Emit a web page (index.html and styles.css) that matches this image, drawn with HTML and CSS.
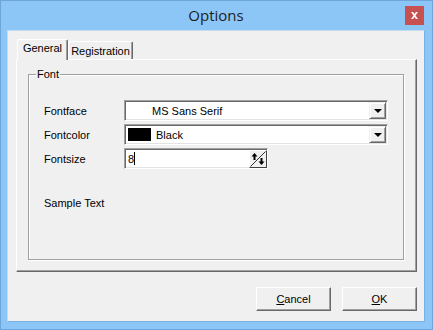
FILE: index.html
```html
<!DOCTYPE html>
<html>
<head>
<meta charset="utf-8">
<link rel="stylesheet" href="styles.css">
</head>
<body>
<div class="window">
  <div class="titlebar">
    <div class="title">Options</div>
    <div class="close">
      <svg width="7" height="7" viewBox="0 0 7 7"><path d="M0 0h2l1.5 2 1.5-2h2l-2.5 3.5 2.5 3.5h-2l-1.5-2-1.5 2h-2l2.5-3.5z" fill="#fff"/></svg>
    </div>
  </div>
  <div class="client">
    <div class="tabs">
      <div class="tab selected">General</div>
      <div class="tab">Registration</div>
    </div>
    <div class="panel">
      <div class="group">
        <span class="group-label">Font</span>
        <div class="form">
          <div class="label">Fontface</div>
          <div class="combo">
            <span class="combo-text indent">MS Sans Serif</span>
            <span class="drop"><span class="arrow"></span></span>
          </div>
          <div class="label">Fontcolor</div>
          <div class="combo">
            <span class="swatch"></span>
            <span class="combo-text">Black</span>
            <span class="drop"><span class="arrow"></span></span>
          </div>
          <div class="label">Fontsize</div>
          <div class="edit">
            <span class="edit-text">8</span><span class="caret"></span>
            <span class="spin">
              <svg width="16" height="16" viewBox="0 0 16 16">
                <path d="M0.5 15.5L15.5 0.5" stroke="#303030" stroke-width="1"/>
                <path d="M4.5 4v5" stroke="#000" stroke-width="2"/>
                <path d="M1.5 5.5L4.5 2 7.5 5.5z" fill="#000"/>
                <path d="M11.5 7v5" stroke="#000" stroke-width="2"/>
                <path d="M8.5 10.5L11.5 14 14.5 10.5z" fill="#000"/>
              </svg>
            </span>
          </div>
        </div>
        <div class="sample">Sample Text</div>
      </div>
    </div>
    <div class="buttons">
      <div class="btn"><u>C</u>ancel</div>
      <div class="btn"><u>O</u>K</div>
    </div>
  </div>
</div>
</body>
</html>
```

FILE: styles.css
```css
html, body {
  margin: 0;
  padding: 0;
}
body {
  width: 433px;
  height: 330px;
  overflow: hidden;
  font-family: "Liberation Sans", Arial, sans-serif;
  font-size: 11px;
  color: #000;
}
.window {
  box-sizing: border-box;
  width: 433px;
  height: 330px;
  border: 1px solid #6ea6da;
  background: #8bc6f7;
  padding: 0 7px 7px 6px;
  display: flex;
  flex-direction: column;
}
.titlebar {
  height: 29px;
  display: grid;
  grid-template-columns: 1fr auto 1fr;
}
.title {
  grid-column: 2;
  font-family: "Open Sans", "Noto Sans", sans-serif;
  font-size: 15px;
  color: #1e1e1e;
  line-height: 29px;
}
.close {
  grid-column: 3;
  justify-self: end;
  margin-top: 5px;
  margin-right: 1px;
  width: 19px;
  height: 19px;
  background: #c75050;
  display: flex;
  align-items: center;
  justify-content: center;
}
.client {
  flex: 1;
  background: #f0f0f0;
  border: 1px solid #c4dcf2;
  border-right-color: #79b1e4;
  border-bottom-color: #79b1e4;
  padding: 8px 7px 10px 8px;
  display: flex;
  flex-direction: column;
}
.tabs {
  height: 20px;
  display: flex;
  align-items: flex-end;
  padding-left: 1px;
}
.tab {
  box-sizing: border-box;
  height: 18px;
  width: 65px;
  border-top: 1px solid #fff;
  border-left: 1px solid #fff;
  border-right: 1px solid #696969;
  box-shadow: inset -1px 0 #a0a0a0;
  border-radius: 2px 2px 0 0;
  text-align: center;
  line-height: 16px;
  padding-top: 1px;
}
.tab.selected {
  width: 51px;
  height: 21px;
  margin-bottom: -1px;
  background: #f0f0f0;
  position: relative;
  z-index: 2;
  line-height: 17px;
  padding-top: 0;
}
.panel {
  box-sizing: border-box;
  height: 213px;
  border-top: 1px solid #fff;
  border-left: 1px solid #fff;
  border-right: 1px solid #696969;
  border-bottom: 1px solid #696969;
  box-shadow: inset -1px -1px #a0a0a0;
  padding: 14px 12px 11px 11px;
  display: flex;
  flex-direction: column;
}
.group {
  flex: 1;
  border: 1px solid #a0a0a0;
  box-shadow: inset 1px 1px #fff, 1px 1px #fff;
  position: relative;
  padding: 25px 0 0 15px;
}
.group-label {
  position: absolute;
  left: 7px;
  top: -7px;
  padding: 0 1px;
  background: #f0f0f0;
  line-height: 13px;
}
.form {
  display: grid;
  grid-template-columns: 80px 264px;
  grid-auto-rows: 21px;
  row-gap: 3px;
  align-items: center;
}
.form > .edit {
  width: 144px;
}
.combo, .edit {
  box-sizing: border-box;
  height: 21px;
  background: #fff;
  border-top: 1px solid #a0a0a0;
  border-left: 1px solid #a0a0a0;
  border-right: 1px solid #fff;
  border-bottom: 1px solid #fff;
  box-shadow: inset 1px 1px #696969, inset -1px -1px #e3e3e3;
  padding: 1px;
  display: flex;
  align-items: center;
}
.combo-text {
  flex: 1;
  padding-left: 5px;
}
.combo-text.indent {
  padding-left: 26px;
}
.swatch {
  width: 23px;
  height: 13px;
  margin-left: 2px;
  background: #000;
}
.drop {
  box-sizing: border-box;
  width: 17px;
  height: 17px;
  background: #f0f0f0;
  border-top: 1px solid #f0f0f0;
  border-left: 1px solid #f0f0f0;
  border-right: 1px solid #696969;
  border-bottom: 1px solid #696969;
  box-shadow: inset 1px 1px #fff, inset -1px -1px #a0a0a0;
  display: flex;
  align-items: center;
  justify-content: center;
}
.arrow {
  width: 0;
  height: 0;
  border-left: 4px solid transparent;
  border-right: 4px solid transparent;
  border-top: 4px solid #000;
  margin-top: 1px;
}
.edit-text {
  padding-left: 2px;
}
.caret {
  width: 1px;
  height: 13px;
  background: #000;
  margin-right: auto;
}
.spin {
  box-sizing: border-box;
  width: 18px;
  height: 18px;
  margin-right: -1px;
  background: #f0f0f0;
  border-top: 1px solid #fff;
  border-left: 1px solid #fff;
  border-right: 1px solid #404040;
  border-bottom: 1px solid #404040;
  display: flex;
}
.sample {
  margin-top: 28px;
  line-height: 13px;
}
.buttons {
  margin-top: 15px;
  display: flex;
  justify-content: flex-end;
  gap: 11px;
}
.btn {
  box-sizing: border-box;
  width: 75px;
  height: 24px;
  border-top: 1px solid #fff;
  border-left: 1px solid #fff;
  border-right: 1px solid #696969;
  border-bottom: 1px solid #696969;
  box-shadow: inset -1px -1px #a0a0a0;
  display: flex;
  align-items: center;
  justify-content: center;
}
```
